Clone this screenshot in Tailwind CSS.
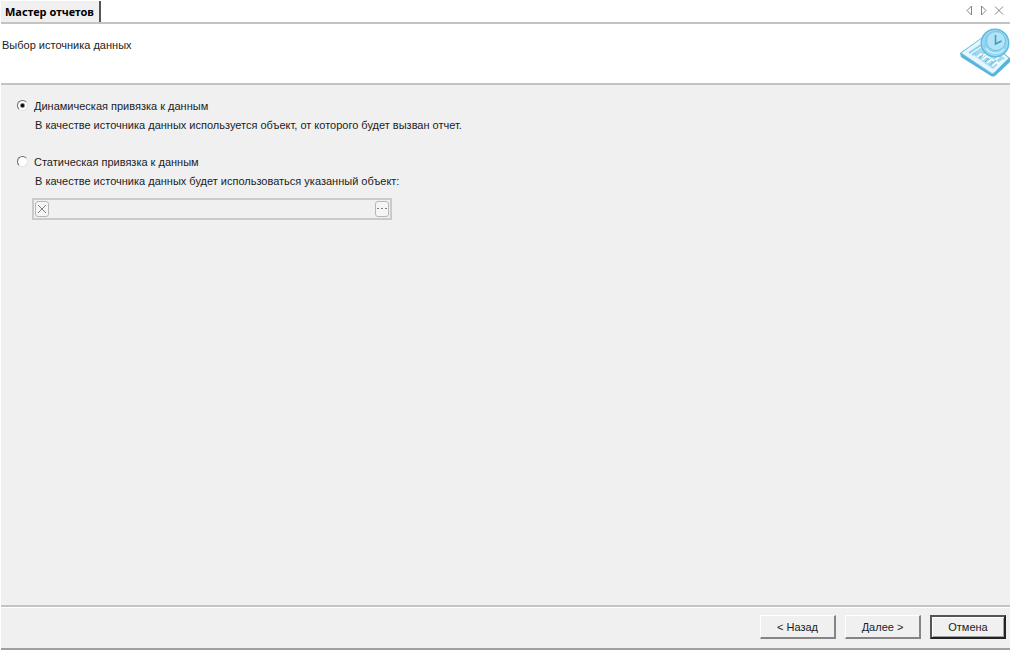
<!DOCTYPE html>
<html lang="ru">
<head>
  <meta charset="UTF-8">
  <title>Мастер отчетов</title>
  <script src="https://cdn.jsdelivr.net/npm/@tailwindcss/browser@4"></script>
</head>
<body class="bg-white h-screen overflow-hidden pl-px pr-[2px] pb-[2px] flex flex-col text-[11px] leading-4 text-[#1c1c1c] font-['Liberation_Sans',Arial,sans-serif]">

  <!-- Вкладки -->
  <div class="h-6 shrink-0 flex justify-between border-b-2 border-[#c3c3c3]">
    <h1 class="mt-px pl-1 pr-[5px] bg-[#f0f0f0] border-r-2 border-[#555] text-[11px] leading-[22px] font-bold text-black font-['Noto_Sans','Open_Sans',sans-serif]">Мастер отчетов</h1>
    <div class="flex items-center gap-1 pr-[6px] pb-px text-[#858585]">
      <button type="button" aria-label="Предыдущая вкладка">
        <svg class="w-[10px] h-[11px]" viewBox="0 0 10 11" fill="none" stroke="currentColor"><path d="M7.5 1v9L3 5.5z"/></svg>
      </button>
      <button type="button" aria-label="Следующая вкладка">
        <svg class="w-[10px] h-[11px]" viewBox="0 0 10 11" fill="none" stroke="currentColor"><path d="M3.5 1v9L8 5.5z"/></svg>
      </button>
      <button type="button" aria-label="Закрыть" class="ml-[2px]">
        <svg class="w-[10px] h-[11px]" viewBox="0 0 10 11" fill="none" stroke="currentColor"><path d="M1 1.5l8 8M9 1.5l-8 8"/></svg>
      </button>
    </div>
  </div>

  <!-- Заголовок шага -->
  <header class="h-[61px] shrink-0 flex justify-between items-start border-b-2 border-[#c3c3c3]">
    <h2 class="pt-[13px] pl-px">Выбор источника данных</h2>
    <svg class="w-[50px] h-[50px] mt-[4px]" viewBox="0 0 50 50">
      <path d="M0 25 L23 9 L50 30 V34 L35 48 Q33 49 31 48 L1 29z" fill="#56b4da"/>
      <path d="M1 25 L23 9 L49 30 L34 45 Q33 46 31 45z" fill="#e6f6fc" stroke="#7ac6e4"/>
      <path d="M12 26 L23 18 L45 30 L33 41z" fill="#a3d9ef"/>
      <path d="M9 25l12-8M12 27l5-3" stroke="#8fcfe9" stroke-width="2"/>
      <path d="M17 29l4-3 2 2 5-4M22 32l5-4 2 2 5-4M27 35l5-4 2 2 5-4M32 38l5-4 1 2 5-4" fill="none" stroke="#fff" stroke-width="1.5"/>
      <path d="M19 30l4-3M25 34l4-4M30 37l6-5" stroke="#5fb5d8"/>
      <circle cx="35" cy="15" r="14.5" fill="#62bce1"/>
      <circle cx="35" cy="15" r="12.5" fill="#8fd3ee" stroke="#a6dff4"/>
      <circle cx="36" cy="13" r="9.5" fill="#b2e3f6" stroke="#6fc4e5"/>
      <path d="M26 20a11 11 0 0 0 18 1" fill="none" stroke="#c9eefa" stroke-width="1.5"/>
      <path d="M35.500 7v9l6-3" fill="none" stroke="#3b9cc6" stroke-width="1.5"/>
    </svg>
  </header>

  <!-- Источник данных -->
  <main class="grow bg-[#f0f0f0] pt-[13px] pl-4">
    <div class="flex items-start">
      <input type="radio" name="binding" id="dynamic" checked class="appearance-none w-[11px] h-[11px] mt-[2px] rounded-full bg-white border border-t-[#696969] border-l-[#696969] border-r-[#e3e3e3] border-b-[#e3e3e3] checked:bg-[radial-gradient(circle,#000_1px,#fff_3px)]">
      <div class="pl-[6px]">
        <label for="dynamic">Динамическая привязка к данным</label>
        <p class="mt-[3px] pl-px">В качестве источника данных используется объект, от которого будет вызван отчет.</p>
      </div>
    </div>

    <div class="mt-[21px] flex items-start">
      <input type="radio" name="binding" id="static" class="appearance-none w-[11px] h-[11px] mt-[2px] rounded-full bg-white border border-t-[#696969] border-l-[#696969] border-r-[#e3e3e3] border-b-[#e3e3e3] checked:bg-[radial-gradient(circle,#000_1px,#fff_3px)]">
      <div class="pl-[6px]">
        <label for="static">Статическая привязка к данным</label>
        <p class="mt-[3px] pl-px"><label for="source">В качестве источника данных будет использоваться указанный объект:</label></p>
      </div>
    </div>

    <div class="mt-[9px] ml-[15px] w-[360px] max-w-full h-[22px] flex items-center px-px border-2 border-[#cacaca]">
      <button type="button" disabled aria-label="Очистить" class="w-[14px] h-4 shrink-0 flex items-center justify-center border border-[#b5b8bb] rounded-[3px] bg-[#f5f5f5] text-[#808080]">
        <svg class="w-[10px] h-[10px]" viewBox="0 0 10 10" fill="none" stroke="currentColor"><path d="M1 1l8 8M9 1l-8 8"/></svg>
      </button>
      <input type="text" id="source" disabled class="grow min-w-0 h-4 px-1">
      <button type="button" disabled aria-label="Выбрать" class="w-[14px] h-4 shrink-0 flex items-center justify-center border border-[#b5b8bb] rounded-[3px] bg-[#f5f5f5] text-[#808080]">
        <svg class="w-[10px] h-[2px]" viewBox="0 0 10 2" fill="currentColor"><path d="M0 0h2v1H0zM4 0h2v1H4zM8 0h2v1H8z"/></svg>
      </button>
    </div>
  </main>

  <!-- Кнопки -->
  <footer class="h-[45px] shrink-0 bg-[#f0f0f0] border-t-2 border-b-2 border-t-[#c3c3c3] border-b-[#a0a0a0]">
    <div class="border-t border-white pt-[7px] pr-1 flex justify-end gap-[9px]">
      <button type="button" class="w-[76px] h-6 border-t border-l border-r-2 border-b-2 border-t-white border-l-white border-r-[#858585] border-b-[#858585]">&lt; Назад</button>
      <button type="button" class="w-[76px] h-6 border-t border-l border-r-2 border-b-2 border-t-white border-l-white border-r-[#858585] border-b-[#858585]">Далее &gt;</button>
      <button type="button" class="w-[76px] h-6 border-2 border-t-[#555] border-l-[#555] border-r-[#222] border-b-[#222] shadow-[inset_1px_1px_#fff,inset_-1px_-1px_#a0a0a0]">Отмена</button>
    </div>
  </footer>

</body>
</html>
